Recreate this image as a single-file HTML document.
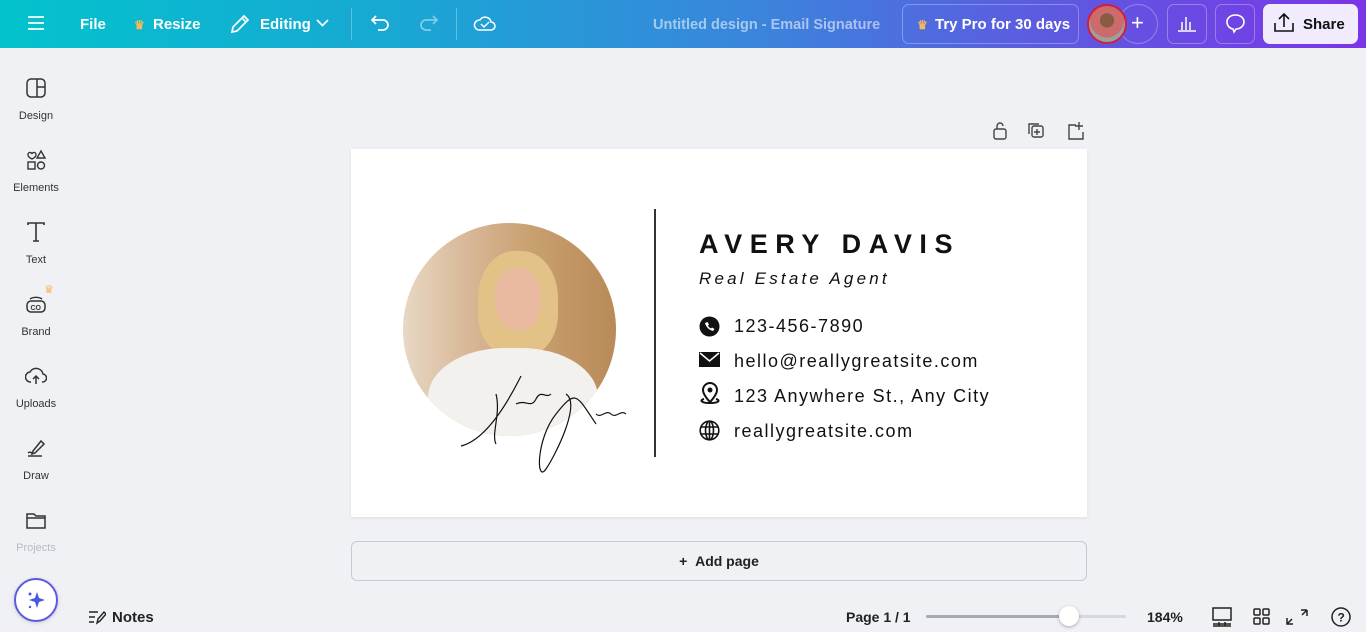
<!DOCTYPE html>
<html><head><meta charset="utf-8"><style>
*{box-sizing:border-box;margin:0;padding:0}
body{width:1366px;height:632px;overflow:hidden;background:#f0f1f5;font-family:"Liberation Sans",sans-serif;position:relative}
.top{position:absolute;left:0;top:0;width:1366px;height:48px;background:linear-gradient(90deg,#02c3cc 0%,#1aa6d4 30%,#3a85dc 55%,#5b5de0 75%,#7b35e6 100%);color:#fff}
.t{position:absolute;top:16px;font-size:15px;font-weight:bold;color:#fff}
.side{position:absolute;left:0;top:48px;width:72px;height:584px}
.si{position:absolute;left:0;width:72px;text-align:center;font-size:11px;color:#333}
.si svg{display:block;margin:0 auto 11px}
.card{position:absolute;left:351px;top:149px;width:736px;height:368px;background:#fff;box-shadow:0 1px 3px rgba(0,0,0,.08)}
.name{position:absolute;left:348px;top:80px;font-size:27px;font-weight:bold;letter-spacing:7.6px;color:#111}
.role{position:absolute;left:348px;top:120px;font-size:17px;font-style:italic;letter-spacing:3.2px;color:#111}
.row{position:absolute;left:383px;font-size:18px;letter-spacing:1.5px;color:#111}
.ic{position:absolute;left:348px}
.addp{position:absolute;left:351px;top:541px;width:736px;height:40px;border:1px solid #c8cad1;border-radius:6px;text-align:center;line-height:38px;font-size:14px;font-weight:bold;color:#222}
.bot{position:absolute;font-size:14px;color:#222}
</style></head><body>
<div class="top">
<svg style="position:absolute;left:27px;top:15px" width="18" height="16"><path d="M1 2h16M1 8h16M1 14h16" stroke="#fff" stroke-width="1.8"/></svg>
<div class="t" style="left:80px">File</div>
<div class="t" style="left:134px;color:#f5b85c;font-size:12px;top:18px">♛</div>
<div class="t" style="left:153px">Resize</div>
<svg style="position:absolute;left:229px;top:13px" width="22" height="22"><path d="M3 19l1-5L15 3l4 4L8 18z M13 5l4 4" stroke="#fff" stroke-width="1.7" fill="none"/></svg>
<div class="t" style="left:260px">Editing</div>
<svg style="position:absolute;left:316px;top:19px" width="13" height="9"><path d="M1 1l5.5 5.5L12 1" stroke="#fff" stroke-width="1.7" fill="none"/></svg>
<div style="position:absolute;left:351px;top:8px;width:1px;height:32px;background:rgba(255,255,255,.3)"></div>
<svg style="position:absolute;left:370px;top:13px" width="22" height="20"><path d="M6 3L2 7l4 4M2 7h11a5 5 0 010 10H8" stroke="#fff" stroke-width="1.7" fill="none"/></svg>
<svg style="position:absolute;left:417px;top:13px" width="22" height="20" opacity=".45"><path d="M16 3l4 4-4 4M20 7H9a5 5 0 000 10h5" stroke="#fff" stroke-width="1.7" fill="none"/></svg>
<div style="position:absolute;left:456px;top:8px;width:1px;height:32px;background:rgba(255,255,255,.3)"></div>
<svg style="position:absolute;left:473px;top:13px" width="24" height="20"><path d="M6 17h12a4 4 0 000-8 6 6 0 00-11-2 5 5 0 00-1 10z M8 11l3 3 5-5" stroke="#fff" stroke-width="1.5" fill="none"/></svg>
<div class="t" style="left:653px;color:rgba(255,255,255,.55);font-size:14.5px;top:17px">Untitled design - Email Signature</div>
<div style="position:absolute;left:902px;top:4px;width:177px;height:40px;border:1px solid rgba(255,255,255,.3);border-radius:7px"></div>
<div class="t" style="left:917px;color:#f5b85c;font-size:12px;top:18px">♛</div>
<div class="t" style="left:935px">Try Pro for 30 days</div>
<div style="position:absolute;left:1118px;top:4px;width:40px;height:40px;border:1px solid rgba(255,255,255,.3);border-radius:50%"></div>
<div class="t" style="left:1131px;top:10px;font-size:22px;font-weight:normal">+</div>
<div style="position:absolute;left:1087px;top:4px;width:40px;height:40px;border:2px solid #d21f3c;border-radius:50%;background:radial-gradient(circle at 50% 40%,#8a5a44 0 25%,#cc6b6b 26% 60%,#9aa0a0 61%)"></div>
<div style="position:absolute;left:1167px;top:4px;width:40px;height:40px;border:1px solid rgba(255,255,255,.3);border-radius:7px"></div>
<svg style="position:absolute;left:1177px;top:13px" width="20" height="20"><path d="M1 18h18M5 17V9M9 17V4M13 17V9" stroke="#fff" stroke-width="1.5"/></svg>
<div style="position:absolute;left:1215px;top:4px;width:40px;height:40px;border:1px solid rgba(255,255,255,.3);border-radius:7px"></div>
<svg style="position:absolute;left:1225px;top:13px" width="21" height="21"><path d="M10.5 2C5.5 2 2 5 2 9s3 6.5 6 7l1 3 2-3c4 0 8-3 8-7s-3.5-7-8.5-7z" stroke="#fff" stroke-width="1.6" fill="none"/></svg>
<div style="position:absolute;left:1263px;top:4px;width:95px;height:40px;background:#f2ebfd;border-radius:7px"></div>
<svg style="position:absolute;left:1273px;top:13px" width="22" height="20"><path d="M2 10v8h18v-8M11 14V2M6 6l5-5 5 5" stroke="#111" stroke-width="1.6" fill="none"/></svg>
<div class="t" style="left:1303px;color:#111">Share</div>
</div>

<div class="side">
<div class="si" style="top:29px"><svg width="22" height="22"><rect x="2" y="2" width="18" height="18" rx="4" stroke="#333" stroke-width="1.5" fill="none"/><path d="M12 2v18M12 10h8" stroke="#333" stroke-width="1.5"/></svg>Design</div>
<div class="si" style="top:101px"><svg width="22" height="22"><path d="M3 6a2 2 0 014-1 2 2 0 014 1c0 2-4 4-4 4S3 8 3 6zM16 2l4 7h-8z" stroke="#333" stroke-width="1.4" fill="none"/><rect x="3" y="13" width="7" height="7" stroke="#333" stroke-width="1.4" fill="none"/><circle cx="16" cy="16.5" r="3.5" stroke="#333" stroke-width="1.4" fill="none"/></svg>Elements</div>
<div class="si" style="top:173px"><svg width="22" height="22"><path d="M3 4V2h16v2M11 2v18M8 20h6" stroke="#333" stroke-width="1.6" fill="none"/></svg>Text</div>
<div class="si" style="top:245px"><svg width="22" height="22"><rect x="2" y="8" width="18" height="11" rx="4" stroke="#333" stroke-width="1.5" fill="none"/><text x="5.5" y="17" font-size="7" font-weight="bold" font-family="Liberation Sans" fill="#333">CO</text><path d="M5 6a8 5 0 0112 0" stroke="#333" stroke-width="1.4" fill="none"/></svg>Brand</div>
<div style="position:absolute;left:44px;top:235px;color:#f5b85c;font-size:11px">♛</div>
<div class="si" style="top:317px"><svg width="22" height="22"><path d="M6 17a5 5 0 01-1-10 7 7 0 0113 2 4 4 0 01-1 8M11 19v-8M8 14l3-3 3 3" stroke="#333" stroke-width="1.5" fill="none"/></svg>Uploads</div>
<div class="si" style="top:389px"><svg width="22" height="22"><path d="M8 14l8-10 3 3-9 9-3 1zM3 19h14M3 16c1-1 3-1 4 0" stroke="#333" stroke-width="1.5" fill="none"/></svg>Draw</div>
<div class="si" style="top:461px;color:#b8bac0"><svg width="22" height="22"><path d="M2 5h7l2 2h9v12H2z M2 9h18" stroke="#333" stroke-width="1.5" fill="none"/></svg>Projects</div>
<div style="position:absolute;left:14px;top:530px;width:44px;height:44px;border-radius:50%;background:#fff;border:2px solid #5a5be0;box-shadow:0 1px 4px rgba(0,0,0,.15)"></div>
<svg style="position:absolute;left:25px;top:541px" width="22" height="22"><path d="M12 3l2 6 6 2-6 2-2 6-2-6-6-2 6-2z" fill="#4a57e0"/><circle cx="5" cy="5" r="1.5" fill="#4a57e0"/><circle cx="5" cy="18" r="1.2" fill="#4a57e0"/></svg>
</div>

<svg style="position:absolute;left:991px;top:121px" width="95" height="20"><g stroke="#444" stroke-width="1.4" fill="none"><rect x="3" y="8" width="12" height="10" rx="2"/><path d="M6 8V5a3 3 0 016 0"/><rect x="41" y="5" width="11" height="11" rx="2"/><path d="M38 13V3h10M46 8v6M43 11h6"/><path d="M85 4h-7v14h14v-7M88 1v8M84 5h8"/></g></svg>

<div class="card">
<div style="position:absolute;left:52px;top:74px;width:213px;height:213px;border-radius:50%;overflow:hidden;background:linear-gradient(90deg,#e8d8c4 0%,#d8b898 30%,#c9a070 60%,#b88a58 100%)">
<div style="position:absolute;left:75px;top:28px;width:80px;height:105px;border-radius:45% 45% 40% 40%;background:#e3c288"></div>
<div style="position:absolute;left:92px;top:45px;width:46px;height:62px;border-radius:45%;background:#e9b9a0"></div>
<div style="position:absolute;left:25px;top:125px;width:170px;height:110px;border-radius:45% 45% 0 0;background:#f3f1ee"></div>
</div>
<svg style="position:absolute;left:105px;top:205px" width="180" height="120"><path d="M5 92c20-5 40-30 60-70M40 40c5 20 -5 40 0 50 M60 50c10-5 15 5 20-5s10 0 15-5 M110 40c15 10 -10 60 -20 75s-10-30 10-55 20-20 40 10 M140 60c5 5 10-5 15 0s10-5 15 0" stroke="#111" stroke-width="1.2" fill="none"/></svg>
<div style="position:absolute;left:303px;top:60px;width:2px;height:248px;background:#333"></div>
<div class="name">AVERY DAVIS</div>
<div class="role">Real Estate Agent</div>
<svg class="ic" style="top:167px" width="21" height="21"><circle cx="10.5" cy="10.5" r="10" fill="#111"/><path d="M6 7c1 4 4 7 8 8l1.5-2-2.5-1.5-1 1c-1.5-.7-2.5-1.7-3-3l1-1L8.5 6z" fill="#fff"/></svg>
<div class="row" style="top:167px">123-456-7890</div>
<svg class="ic" style="top:203px" width="21" height="15"><rect width="21" height="15" fill="#111"/><path d="M1 1l9.5 8L20 1" stroke="#fff" stroke-width="1.5" fill="none"/></svg>
<div class="row" style="top:202px">hello@reallygreatsite.com</div>
<svg class="ic" style="top:231px" width="22" height="25"><path d="M11 22s-7-7-7-12a7 7 0 0114 0c0 5-7 12-7 12z" stroke="#111" stroke-width="2" fill="none"/><circle cx="11" cy="10" r="2.5" fill="#111"/><path d="M5 19c-4 1-4 4 6 4s10-3 6-4" stroke="#111" stroke-width="2" fill="none"/></svg>
<div class="row" style="top:237px">123 Anywhere St., Any City</div>
<svg class="ic" style="top:271px" width="21" height="21"><g stroke="#111" stroke-width="1.6" fill="none"><circle cx="10.5" cy="10.5" r="9.3"/><ellipse cx="10.5" cy="10.5" rx="4" ry="9.3"/><path d="M1.5 7h18M1.5 14h18M10.5 1v19"/></g></svg>
<div class="row" style="top:272px">reallygreatsite.com</div>
</div>

<div class="addp">+&nbsp;&nbsp;Add page</div>

<svg style="position:absolute;left:88px;top:609px" width="18" height="16"><path d="M1 3h9M1 8h6M1 13h5M9 14l1-4 6-7 2 2-6 7z" stroke="#222" stroke-width="1.4" fill="none"/></svg>
<div class="bot" style="left:112px;top:609px;font-weight:bold;font-size:15px">Notes</div>
<div class="bot" style="left:846px;top:609px;font-weight:bold">Page 1 / 1</div>
<div style="position:absolute;left:926px;top:615px;width:200px;height:3px;background:#d6d8de;border-radius:2px"></div>
<div style="position:absolute;left:926px;top:615px;width:143px;height:3px;background:#a6aab3;border-radius:2px"></div>
<div style="position:absolute;left:1059px;top:606px;width:20px;height:20px;border-radius:50%;background:#fff;box-shadow:0 1px 3px rgba(0,0,0,.3)"></div>
<div class="bot" style="left:1147px;top:609px;font-weight:bold">184%</div>
<svg style="position:absolute;left:1211px;top:606px" width="140" height="22"><g stroke="#222" stroke-width="1.5" fill="none"><rect x="2" y="2" width="18" height="12"/><path d="M2 18h18M2 20h18M8 16v4M14 16v4"/><rect x="43" y="3" width="6" height="6" rx="1"/><rect x="52" y="3" width="6" height="6" rx="1"/><rect x="43" y="12" width="6" height="6" rx="1"/><rect x="52" y="12" width="6" height="6" rx="1"/><path d="M96 4h-6M96 4v6M96 4l-5 5M82 18h-6v-6M76 18l5-5"/><circle cx="130" cy="11" r="9"/></g><text x="126.5" y="15.5" font-size="12" font-weight="bold" font-family="Liberation Sans" fill="#222">?</text></svg>
</body></html>
